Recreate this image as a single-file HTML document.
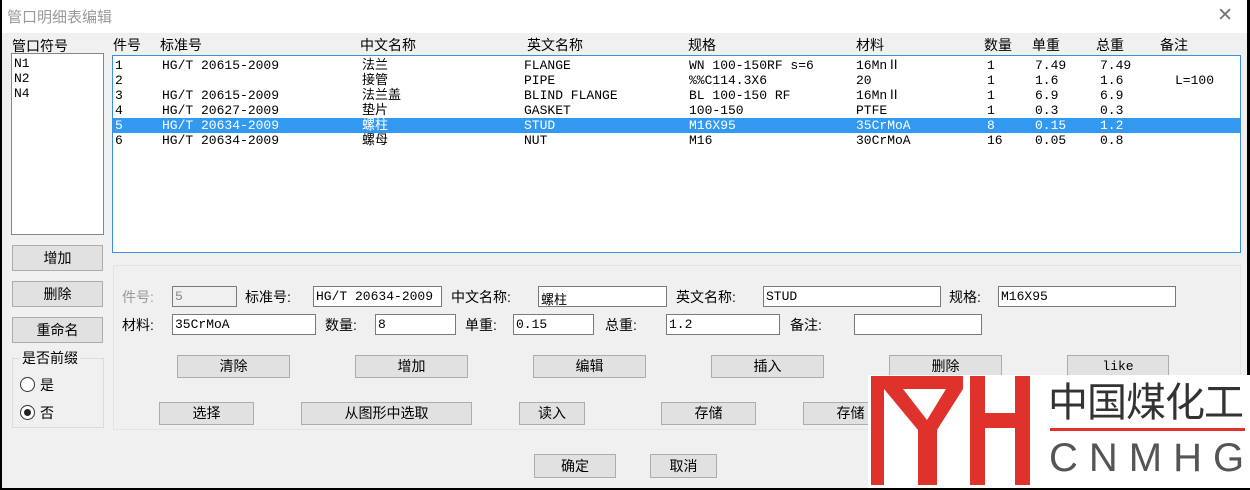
<!DOCTYPE html>
<html><head><meta charset="utf-8"><style>
*{margin:0;padding:0;box-sizing:border-box}
body{width:1250px;height:490px;overflow:hidden;background:#000;position:relative;font-family:"Liberation Sans","Noto Sans CJK SC",sans-serif;font-size:14px;color:#000}
.win{position:absolute;left:2px;top:0;width:1245px;height:488px;background:#f0f0f0}
.title{position:absolute;left:0;top:0;width:100%;height:33px;background:#fff;color:#999;font-size:15px;padding:6px 0 0 5px}
.close{position:absolute;right:14px;top:4px;font-size:19px;color:#777}
.a{position:absolute;white-space:nowrap}
.box{position:absolute;background:#fff;border:1px solid #828790}
.btn{position:absolute;background:#e1e1e1;border:1px solid #adadad;text-align:center;font-size:14px}
.mono{font-family:"Liberation Mono","Noto Sans CJK SC",monospace;font-size:13px;line-height:15px}
.inp{position:absolute;background:#fff;border:1px solid #7a7a7a;height:21px;font-family:"Liberation Mono","Noto Sans CJK SC",monospace;font-size:13px;padding:2px 2px;white-space:nowrap}
.row{position:absolute;left:0;width:100%;height:15px}
.row span{position:absolute;top:0;white-space:nowrap}
</style></head><body><div class="win">
<div class="title">管口明细表编辑<span class="close">✕</span></div>
<div class="a" style="left:10px;top:36px">管口符号</div>
<div class="box mono" style="left:9px;top:53px;width:93px;height:182px;padding:2px 2px">N1<br>N2<br>N4</div>
<div class="btn" style="left:10px;top:245px;width:91px;height:26px;line-height:24px">增加</div>
<div class="btn" style="left:10px;top:281px;width:91px;height:26px;line-height:24px">删除</div>
<div class="btn" style="left:10px;top:317px;width:91px;height:26px;line-height:24px">重命名</div>
<div class="a" style="left:10px;top:358px;width:92px;height:70px;border:1px solid #dcdcdc"></div>
<div class="a" style="left:18px;top:348px;background:#f0f0f0;padding:0 2px">是否前缀</div>
<div class="a" style="left:18px;top:377px;width:15px;height:15px;border:1px solid #333;border-radius:50%;background:#fff"></div>
<div class="a" style="left:38px;top:375px">是</div>
<div class="a" style="left:18px;top:405px;width:15px;height:15px;border:1px solid #333;border-radius:50%;background:#fff"><div style="position:absolute;left:3px;top:3px;width:7px;height:7px;border-radius:50%;background:#222"></div></div>
<div class="a" style="left:38px;top:403px">否</div>
<div class="a" style="left:111px;top:35px">件号</div>
<div class="a" style="left:158px;top:35px">标准号</div>
<div class="a" style="left:358px;top:35px">中文名称</div>
<div class="a" style="left:525px;top:35px">英文名称</div>
<div class="a" style="left:686px;top:35px">规格</div>
<div class="a" style="left:854px;top:35px">材料</div>
<div class="a" style="left:982px;top:35px">数量</div>
<div class="a" style="left:1030px;top:35px">单重</div>
<div class="a" style="left:1094px;top:35px">总重</div>
<div class="a" style="left:1158px;top:35px">备注</div>
<div class="box mono" style="left:110px;top:55px;width:1129px;height:198px;border:1px solid #3c8fd8">
<div class="row" style="top:2px"><span style="left:2px">1</span><span style="left:49px">HG/T 20615-2009</span><span style="left:249px">法兰</span><span style="left:411px">FLANGE</span><span style="left:576px">WN 100-150RF s=6</span><span style="left:743px">16MnⅡ</span><span style="left:874px">1</span><span style="left:922px">7.49</span><span style="left:987px">7.49</span></div>
<div class="row" style="top:17px"><span style="left:2px">2</span><span style="left:249px">接管</span><span style="left:411px">PIPE</span><span style="left:576px">%%C114.3X6</span><span style="left:743px">20</span><span style="left:874px">1</span><span style="left:922px">1.6</span><span style="left:987px">1.6</span><span style="left:1062px">L=100</span></div>
<div class="row" style="top:32px"><span style="left:2px">3</span><span style="left:49px">HG/T 20615-2009</span><span style="left:249px">法兰盖</span><span style="left:411px">BLIND FLANGE</span><span style="left:576px">BL 100-150 RF</span><span style="left:743px">16MnⅡ</span><span style="left:874px">1</span><span style="left:922px">6.9</span><span style="left:987px">6.9</span></div>
<div class="row" style="top:47px"><span style="left:2px">4</span><span style="left:49px">HG/T 20627-2009</span><span style="left:249px">垫片</span><span style="left:411px">GASKET</span><span style="left:576px">100-150</span><span style="left:743px">PTFE</span><span style="left:874px">1</span><span style="left:922px">0.3</span><span style="left:987px">0.3</span></div>
<div class="row" style="top:62px;background:#3399f0;color:#fff"><span style="left:2px">5</span><span style="left:49px">HG/T 20634-2009</span><span style="left:249px">螺柱</span><span style="left:411px">STUD</span><span style="left:576px">M16X95</span><span style="left:743px">35CrMoA</span><span style="left:874px">8</span><span style="left:922px">0.15</span><span style="left:987px">1.2</span></div>
<div class="row" style="top:77px"><span style="left:2px">6</span><span style="left:49px">HG/T 20634-2009</span><span style="left:249px">螺母</span><span style="left:411px">NUT</span><span style="left:576px">M16</span><span style="left:743px">30CrMoA</span><span style="left:874px">16</span><span style="left:922px">0.05</span><span style="left:987px">0.8</span></div>
</div>
<div class="a" style="left:111px;top:265px;width:1128px;height:165px;border:1px solid #e4e4e4"></div>
<div class="a" style="left:120px;top:287px;color:#999">件号:</div>
<div class="inp" style="left:170px;top:286px;width:65px;color:#888;background:#f0f0f0">5</div>
<div class="a" style="left:243px;top:287px">标准号:</div>
<div class="inp" style="left:311px;top:286px;width:129px">HG/T 20634-2009</div>
<div class="a" style="left:449px;top:287px">中文名称:</div>
<div class="inp" style="left:536px;top:286px;width:129px">螺柱</div>
<div class="a" style="left:674px;top:287px">英文名称:</div>
<div class="inp" style="left:761px;top:286px;width:178px">STUD</div>
<div class="a" style="left:947px;top:287px">规格:</div>
<div class="inp" style="left:996px;top:286px;width:178px">M16X95</div>
<div class="a" style="left:120px;top:315px">材料:</div>
<div class="inp" style="left:170px;top:314px;width:144px">35CrMoA</div>
<div class="a" style="left:323px;top:315px">数量:</div>
<div class="inp" style="left:373px;top:314px;width:81px">8</div>
<div class="a" style="left:463px;top:315px">单重:</div>
<div class="inp" style="left:511px;top:314px;width:81px">0.15</div>
<div class="a" style="left:603px;top:315px">总重:</div>
<div class="inp" style="left:664px;top:314px;width:114px">1.2</div>
<div class="a" style="left:788px;top:315px">备注:</div>
<div class="inp" style="left:852px;top:314px;width:128px"></div>
<div class="btn" style="left:175px;top:355px;width:113px;height:23px;line-height:21px">清除</div>
<div class="btn" style="left:353px;top:355px;width:113px;height:23px;line-height:21px">增加</div>
<div class="btn" style="left:531px;top:355px;width:113px;height:23px;line-height:21px">编辑</div>
<div class="btn" style="left:709px;top:355px;width:113px;height:23px;line-height:21px">插入</div>
<div class="btn" style="left:887px;top:355px;width:113px;height:23px;line-height:21px">删除</div>
<div class="btn mono" style="left:1065px;top:355px;width:102px;height:23px;line-height:21px">like</div>
<div class="btn" style="left:157px;top:402px;width:95px;height:23px;line-height:21px">选择</div>
<div class="btn" style="left:299px;top:402px;width:171px;height:23px;line-height:21px">从图形中选取</div>
<div class="btn" style="left:517px;top:402px;width:66px;height:23px;line-height:21px">读入</div>
<div class="btn" style="left:659px;top:402px;width:95px;height:23px;line-height:21px">存储</div>
<div class="btn" style="left:801px;top:402px;width:95px;height:23px;line-height:21px">存储</div>
<div class="btn" style="left:532px;top:454px;width:82px;height:24px;line-height:22px">确定</div>
<div class="btn" style="left:648px;top:454px;width:67px;height:24px;line-height:22px">取消</div>
</div>
<div class="a" style="left:868px;top:375px;width:382px;height:113px;background:#fff"></div>
<svg class="a" style="left:0;top:0" width="1250" height="490">
<g fill="#e0322c">
<rect x="871" y="376" width="13" height="109"/>
<rect x="871" y="376" width="92" height="13"/>
<polygon points="884,389 903,389 927,420 946,389 963,389 937,430 918,430"/>
<rect x="918" y="425" width="19" height="60"/>
<rect x="970" y="376" width="15" height="109"/>
<rect x="1015" y="376" width="15" height="109"/>
<rect x="970" y="413" width="60" height="15"/>
<rect x="1050" y="428" width="195" height="3"/>
</g>
</svg>
<div class="a" style="left:1048px;top:374px;font-size:40px;color:#333;letter-spacing:-1px;font-family:'Noto Sans CJK SC',sans-serif;line-height:50px">中国煤化工</div>
<div class="a" style="left:1049px;top:436px;font-size:40px;color:#555;letter-spacing:11px;line-height:44px;font-family:'Liberation Sans',sans-serif">CNMHG</div>
</body></html>
